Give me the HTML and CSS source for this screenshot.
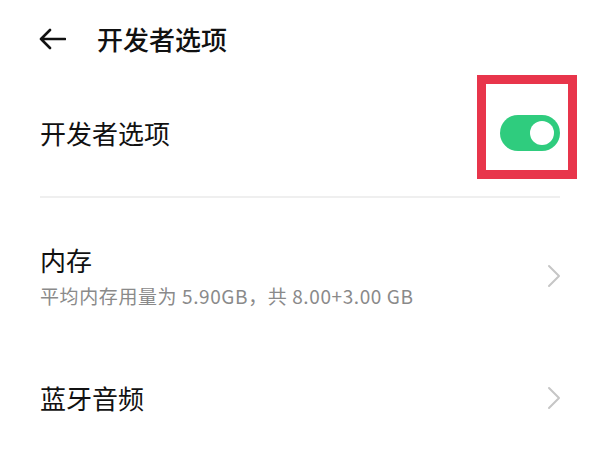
FILE: index.html
```html
<!DOCTYPE html>
<html lang="zh-CN">
<head>
    <meta charset="UTF-8">
    <meta name="viewport" content="width=device-width, initial-scale=1.0">
    <title>开发者选项</title>
    <link rel="stylesheet" href="styles.css">
</head>
<body>
    <div class="page">
        <div class="header">
            <svg class="back" viewBox="0 0 28 22" width="28" height="22">
                <path d="M27 11H3M12 2L3 11l9 9" fill="none" stroke="#111" stroke-width="2.6" stroke-linecap="round" stroke-linejoin="round"/>
            </svg>
            <div class="title">开发者选项</div>
        </div>

        <div class="row row-main">
            <div class="row-title">开发者选项</div>
            <div class="switch on">
                <div class="knob"></div>
            </div>
            <!-- annotation box around the switch -->
            <div class="highlight"></div>
        </div>

        <div class="row row-memory">
            <div class="row-text">
                <div class="row-title">内存</div>
                <div class="row-sub">平均内存用量为 5.90GB，共 8.00+3.00 GB</div>
            </div>
            <svg class="chevron" viewBox="0 0 14 24" width="14" height="24">
                <path d="M2 2l10 10-10 10" fill="none" stroke="#c6c6c6" stroke-width="2" stroke-linecap="round" stroke-linejoin="round"/>
            </svg>
        </div>

        <div class="row row-audio">
            <div class="row-title">蓝牙音频</div>
            <svg class="chevron" viewBox="0 0 14 24" width="14" height="24">
                <path d="M2 2l10 10-10 10" fill="none" stroke="#c6c6c6" stroke-width="2" stroke-linecap="round" stroke-linejoin="round"/>
            </svg>
        </div>
    </div>
</body>
</html>
```

FILE: styles.css
```css
* {
    margin: 0;
    padding: 0;
    box-sizing: border-box;
}

body {
    font-family: "Noto Sans CJK SC", "Noto Sans", sans-serif;
    background: #fff;
    color: #111;
    width: 600px;
    height: 450px;
    overflow: hidden;
}

.page {
    padding: 0 40px;
}

.header {
    height: 78px;
    display: flex;
    align-items: center;
}

.back {
    margin-left: -2px;
    margin-right: 31px;
}

.title {
    font-size: 26px;
    font-weight: 500;
    line-height: 36px;
}

.row {
    display: flex;
    align-items: center;
    justify-content: space-between;
}

.row-title {
    font-size: 26px;
    line-height: 36px;
}

.row-main {
    position: relative;
    height: 120px;
    padding-bottom: 8px;
    border-bottom: 2px solid #efefef;
}

.switch {
    width: 60px;
    height: 36px;
    border-radius: 18px;
    background: #2fcc7e;
    display: flex;
    align-items: center;
    justify-content: flex-end;
    padding: 0 6px;
}

.knob {
    width: 24px;
    height: 24px;
    border-radius: 50%;
    background: #fff;
}

.highlight {
    position: absolute;
    left: 437px;
    top: -3px;
    width: 100px;
    height: 104px;
    border: 9px solid #e8354b;
}

.row-memory {
    padding: 44px 0 44px;
}

.row-sub {
    font-size: 19px;
    line-height: 26px;
    letter-spacing: 0.6px;
    color: #8a8a8a;
    margin-top: 5px;
}

.chevron {
    margin-right: -1px;
}

.row-audio {
    padding-top: 27px;
}
```
